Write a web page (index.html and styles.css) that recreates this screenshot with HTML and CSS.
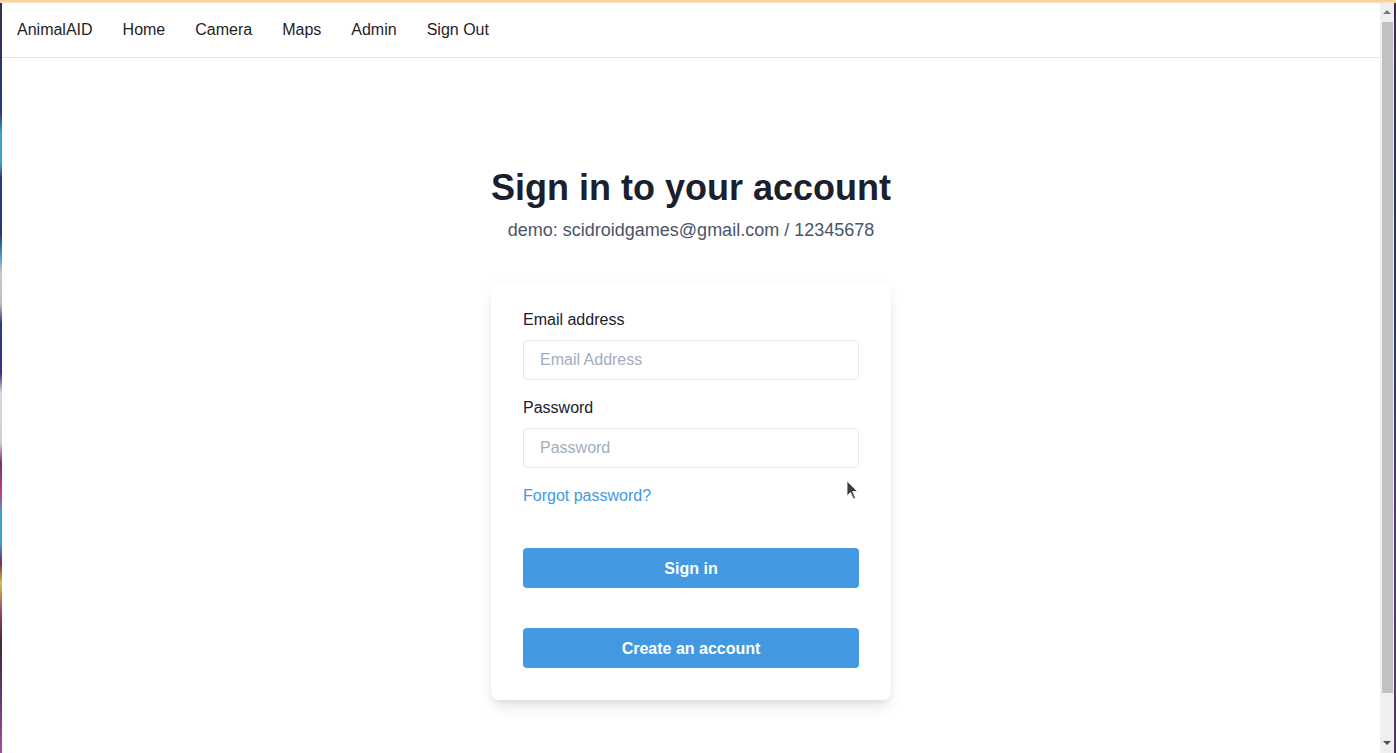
FILE: index.html
```html
<!DOCTYPE html>
<html lang="en">
<head>
<meta charset="utf-8">
<title>AnimalAID - Sign in</title>
<link rel="stylesheet" href="styles.css">
</head>
<body>
<div class="topline"></div>
<div class="frame">
  <div class="desk-left"></div>
  <div class="page">
    <nav class="navbar">
      <a class="nav-link" href="#">AnimalAID</a>
      <a class="nav-link" href="#">Home</a>
      <a class="nav-link" href="#">Camera</a>
      <a class="nav-link" href="#">Maps</a>
      <a class="nav-link" href="#">Admin</a>
      <a class="nav-link" href="#">Sign Out</a>
    </nav>
    <main class="main">
      <h1 class="title">Sign in to your account</h1>
      <p class="subtitle">demo: scidroidgames@gmail.com / 12345678</p>
      <form class="card">
        <label class="label" for="email">Email address</label>
        <input class="input" id="email" type="email" placeholder="Email Address">
        <label class="label label-pw" for="pw">Password</label>
        <input class="input" id="pw" type="password" placeholder="Password">
        <a class="forgot" href="#">Forgot password?</a>
        <button class="btn" type="button">Sign in</button>
        <button class="btn btn-create" type="button">Create an account</button>
      </form>
    </main>
    <svg class="cursor" width="14" height="22" viewBox="0 0 14 22">
      <path d="M1 1 L1 16 L4.5 12.5 L7.5 19 L9.5 18 L6.7 11.6 L11.5 11.6 Z" fill="#3c3c3c" stroke="#ffffff" stroke-width="0.8" stroke-linejoin="round"/>
    </svg>
  </div>
  <div class="scrollbar">
    <div class="sb-arrow sb-up"></div>
    <div class="sb-thumb"></div>
    <div class="sb-arrow sb-down"></div>
  </div>
  <div class="desk-right"></div>
</div>
</body>
</html>
```

FILE: styles.css
```css
* { box-sizing: border-box; }
html, body {
  margin: 0;
  padding: 0;
  width: 1396px;
  height: 753px;
  overflow: hidden;
  background: #ffffff;
  font-family: "Liberation Sans", Arial, sans-serif;
}
body {
  display: flex;
  flex-direction: column;
}
.topline {
  height: 3px;
  flex: none;
  background: linear-gradient(to bottom, #f7cf97 0, #f9d7a8 2px, #fde9cf 3px);
}
.frame {
  flex: 1;
  display: flex;
  min-height: 0;
}
.desk-left {
  width: 2px;
  flex: none;
  background: linear-gradient(to bottom,
    #3a2d4a 0, #2b3566 60px, #2a3b7a 110px, #3aa0d8 130px, #3aa0d8 160px,
    #283a7c 175px, #2c3570 230px, #3b8fc8 250px, #c8c8c8 270px, #bfbfbf 300px,
    #2f3a8a 320px, #353090 370px, #d8d8d8 390px, #cfcfcf 440px,
    #7a2f6a 460px, #c03f7a 490px, #3aa0d8 510px, #3aa0d8 540px, #7a2a55 560px,
    #d0c040 580px, #a23b6a 610px, #3c2a3a 640px, #6a3a7a 700px, #b04aa0 753px);
}
.desk-right {
  width: 2px;
  flex: none;
  background: linear-gradient(to bottom, #3a2d4a, #2b3566 40%, #503a7a 70%, #4a3a6a);
}
.page {
  flex: 1;
  position: relative;
  display: flex;
  flex-direction: column;
  min-width: 0;
}
.navbar {
  height: 55px;
  flex: none;
  display: flex;
  align-items: center;
  padding: 0 0 1px 0;
  border-bottom: 1px solid #e2e5ea;
}
.nav-link {
  padding: 0 15px;
  font-size: 16px;
  line-height: 24px;
  color: #1f2328;
  text-decoration: none;
}
.main {
  display: flex;
  flex-direction: column;
  align-items: center;
  padding-top: 110px;
}
.title {
  margin: 0;
  font-size: 36px;
  line-height: 40px;
  font-weight: 700;
  color: #1a202c;
}
.subtitle {
  margin: 8px 0 0 0;
  font-size: 18px;
  line-height: 28px;
  color: #4a5568;
}
.card {
  margin-top: 39px;
  width: 400px;
  background: #ffffff;
  border-radius: 8px;
  padding: 24px 32px 32px 32px;
  display: flex;
  flex-direction: column;
  box-shadow: 0 10px 15px -3px rgba(0,0,0,0.10), 0 4px 6px -2px rgba(0,0,0,0.05), 0 0 8px rgba(0,0,0,0.03);
}
.label {
  font-size: 16px;
  line-height: 24px;
  padding-top: 1px;
  color: #1a202c;
  margin-bottom: 8px;
}
.label-pw {
  margin-top: 15px;
}
.input {
  height: 40px;
  width: 100%;
  border: 1px solid #e2e8f0;
  border-radius: 4px;
  padding: 0 16px;
  font-family: "Liberation Sans", Arial, sans-serif;
  font-size: 16px;
  color: #2d3748;
  outline: none;
  background: #ffffff;
}
.input::placeholder {
  color: #a0aec0;
  opacity: 1;
}
.forgot {
  margin-top: 16px;
  font-size: 16px;
  line-height: 24px;
  color: #4299e1;
  text-decoration: none;
  align-self: flex-start;
}
.btn {
  margin-top: 40px;
  height: 40px;
  width: 100%;
  border: none;
  border-radius: 4px;
  background: #4299e1;
  color: #ffffff;
  font-family: "Liberation Sans", Arial, sans-serif;
  font-size: 16px;
  font-weight: 700;
  padding: 2px 0 0 0;
  cursor: pointer;
}
.btn-create {
  margin-top: 40px;
}
.cursor {
  position: absolute;
  left: 844px;
  top: 477px;
}
.scrollbar {
  width: 14px;
  flex: none;
  background: #efefef;
  display: flex;
  flex-direction: column;
  align-items: center;
  padding: 4px 0 4px 0;
}
.sb-arrow {
  width: 0;
  height: 0;
  border-left: 4px solid transparent;
  border-right: 4px solid transparent;
  flex: none;
}
.sb-up {
  border-bottom: 4px solid #7a7a7a;
  margin-top: 3px;
  margin-bottom: 8px;
}
.sb-thumb {
  width: 11px;
  height: 671px;
  background: #c1c1c1;
  flex: none;
}
.sb-down {
  border-top: 4px solid #505050;
  margin-top: auto;
  margin-bottom: 4px;
}
```
